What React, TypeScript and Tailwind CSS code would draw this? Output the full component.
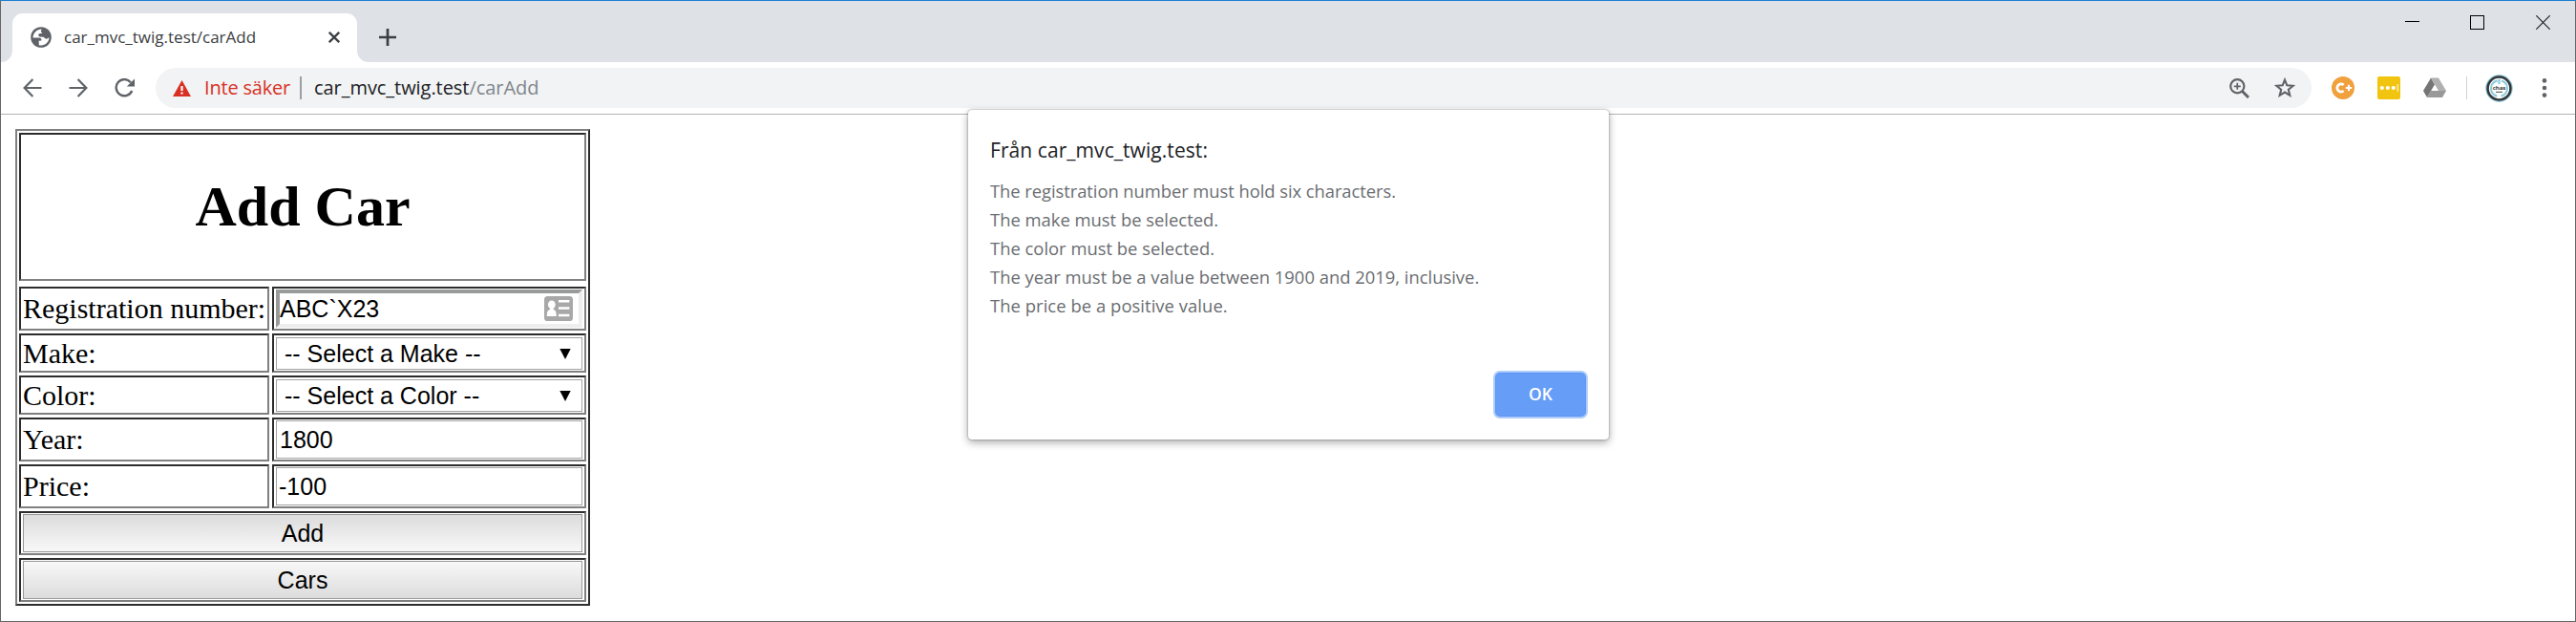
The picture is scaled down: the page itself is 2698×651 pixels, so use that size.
import type { ReactNode } from "react";

const CELL = "border-2 border-t-[#2c2c2c] border-l-[#2c2c2c] border-b-[#808080] border-r-[#808080]";
const SANS = "font-['Liberation_Sans',Arial,sans-serif]";
const UI = "font-['Open_Sans','Noto_Sans',sans-serif]";

function TabStrip() {
  return (
    <div className="flex h-[64px] items-stretch bg-[#dee1e6]">
      <div className="flex w-[12px] items-end bg-white">
        <div className="h-full w-full rounded-br-[12px] bg-[#dee1e6]" />
      </div>
      <div className="flex bg-[#dee1e6] pt-[13px]">
        <div className="flex w-[361px] items-center rounded-t-[11px] bg-white pr-[18px] pl-[19px]">
          <svg className="-mt-px size-[22px] shrink-0" viewBox="0 0 22 22">
            <circle cx="11" cy="11" r="10.8" fill="#5f6368" />
            <path
              d="M11.6 2.5 C6.6 2.6 2.6 6.4 2.5 11.6 L9 11.6 C11.2 11.8 11.6 13 11.4 14.6 L8.6 14.8 L8.8 19.2 C12.4 20 16.2 18.6 18.2 15.4 C19.2 13.8 19.4 12.4 19.4 11.2 L17.4 12.6 C15.6 13 14.8 11.6 13.4 10.8 L9.4 10.4 L8 8.8 L9 7.2 L12.4 6.8 L10.8 5 Z"
              fill="#fff"
            />
          </svg>
          <span className="-mt-px ml-[13px] text-[17px] leading-6 whitespace-nowrap text-[#3c4043]">car_mvc_twig.test/carAdd</span>
          <svg className="-mt-px ml-auto size-[12px] shrink-0" viewBox="0 0 12 12" stroke="#3c4043" strokeWidth="2.3">
            <path d="M0.8 0.8 L11.2 11.2 M11.2 0.8 L0.8 11.2" />
          </svg>
        </div>
      </div>
      <div className="flex flex-1 bg-white">
        <div className="flex flex-1 items-center rounded-bl-[12px] bg-[#dee1e6]">
          <svg className="mt-[12px] ml-[23px] size-[18px]" viewBox="0 0 18 18" stroke="#3c4043" strokeWidth="2.7">
            <path d="M9 0 V18 M0 9 H18" />
          </svg>
          <svg className="mb-[19px] ml-auto h-[15px] w-[16px]" viewBox="0 0 16 15" stroke="#000" strokeWidth="1">
            <path d="M0 6.5 H15" shapeRendering="crispEdges" />
          </svg>
          <svg className="mb-[19px] ml-[52px] size-[15px]" viewBox="0 0 15 15" fill="none" stroke="#000" strokeWidth="1">
            <rect x="0.5" y="0.5" width="14" height="14" shapeRendering="crispEdges" />
          </svg>
          <svg className="mr-[26px] mb-[19px] ml-[54px] size-[15px]" viewBox="0 0 15 15" stroke="#222" strokeWidth="1.2">
            <path d="M0.3 0.3 L14.7 14.7 M14.7 0.3 L0.3 14.7" />
          </svg>
        </div>
      </div>
    </div>
  );
}

function Toolbar() {
  return (
    <div className="flex h-[55px] items-center border-b border-[#b4b4b4] bg-white">
      <svg className="ml-[23px] h-[20px] w-[20px]" viewBox="0 0 20 20" fill="none" stroke="#5f6368" strokeWidth="2.2">
        <path d="M19.5 10 H2 M10.4 1 L1.6 10 L10.4 19" />
      </svg>
      <svg className="ml-[28px] h-[20px] w-[20px]" viewBox="0 0 20 20" fill="none" stroke="#5f6368" strokeWidth="2.2">
        <path d="M0.5 10 H18 M9.6 1 L18.4 10 L9.6 19" />
      </svg>
      <svg className="ml-[28px] h-[20px] w-[22px]" viewBox="0 0 22 20" fill="none">
        <path d="M16.9 4.2 A8.6 8.6 0 1 0 18.2 13" stroke="#5f6368" strokeWidth="2.4" />
        <path d="M21 0.6 V8.6 H12.8 Z" fill="#5f6368" />
      </svg>
      <div className="ml-[21px] flex h-[42px] w-[2258px] items-center rounded-full bg-[#f1f3f4] pl-[18px]">
        <svg className="h-[17px] w-[19px]" viewBox="0 0 19 17">
          <path d="M9.5 0 L19 17 H0 Z" fill="#d93025" />
          <path d="M8.4 6 H10.6 V11 H8.4 Z M8.4 12.4 H10.6 V14.6 H8.4 Z" fill="#fff" />
        </svg>
        <span className="ml-[14px] w-[100px] text-[20px] leading-6 tracking-[-0.2px] whitespace-nowrap text-[#d93025]">Inte säker</span>
        <span className="h-[24px] w-[2px] bg-[#9aa0a6]" />
        <span className="ml-[13px] text-[20px] leading-6 tracking-[-0.05px] whitespace-nowrap text-[#202124]">
          car_mvc_twig.test<span className="text-[#80868b]">/carAdd</span>
        </span>
        <svg className="ml-auto size-[21px]" viewBox="0 0 21 21" fill="none" stroke="#5f6368">
          <circle cx="8.3" cy="8.3" r="7.1" strokeWidth="2.2" />
          <path d="M13.2 13.2 L20 20" strokeWidth="3" />
          <path d="M8.3 4.8 V11.8 M4.8 8.3 H11.8" strokeWidth="1.7" />
        </svg>
        <svg className="mr-[17px] ml-[26px] size-[22px]" viewBox="0 0 22 22">
          <path
            d="M11 2.6 L13.3 8.3 L19.6 8.8 L14.8 12.8 L16.3 18.8 L11 15.6 L5.7 18.8 L7.2 12.8 L2.4 8.8 L8.7 8.3 Z"
            fill="none"
            stroke="#5f6368"
            strokeWidth="2.1"
          />
        </svg>
      </div>
      <div className="ml-[21px] flex size-[24px] items-center justify-center rounded-full bg-[#f0a03c]">
        <svg className="size-[24px]" viewBox="0 0 24 24" fill="none" stroke="#fff">
          <path d="M12.6 9.1 A4 4 0 1 0 12.6 14.9" strokeWidth="2.8" />
          <path d="M18 8.8 V15.2 M14.8 12 H21.2" strokeWidth="2.2" />
        </svg>
      </div>
      <svg className="ml-[24px] size-[24px]" viewBox="0 0 24 24">
        <rect width="24" height="24" rx="2" fill="#f1c40f" />
        <circle cx="4.8" cy="12" r="2.1" fill="#fff" />
        <circle cx="10.8" cy="12" r="2.1" fill="#fff" />
        <circle cx="16.8" cy="12" r="2.1" fill="#fff" />
        <path d="M21.2 8 V16" stroke="#fff" strokeWidth="1" />
      </svg>
      <svg className="ml-[24px] h-[22px] w-[24px]" viewBox="0 0 24 22">
        <path d="M8 0.5 L0 14 L4 21 L12 7.5 Z" fill="#757575" />
        <path d="M8 0.5 H16 L24 14 H16 Z" fill="#b0b0b0" />
        <path d="M8 14 H24 L20 21 H4 Z" fill="#999" />
      </svg>
      <div className="ml-[21px] h-[24px] w-px bg-[#cfd1d4]" />
      <svg className="ml-[19px] size-[29px]" viewBox="0 0 29 29">
        <circle cx="14.5" cy="14.5" r="14.2" fill="#8cc3d2" />
        <circle cx="14.5" cy="14.5" r="11.9" fill="#fff" stroke="#33383b" strokeWidth="2.5" />
        <circle cx="14.5" cy="14.5" r="8.4" fill="none" stroke="#8ecbdc" strokeWidth="2.2" strokeDasharray="22 4.4" strokeDashoffset="11" />
        <path d="M14.5 4.6 V10" stroke="#8ecbdc" strokeWidth="2.2" />
        <rect x="7.6" y="10.8" width="13.8" height="6.4" fill="#fff" />
        <text x="14.5" y="16.2" textAnchor="middle" fontSize="6" fontWeight="700" fontFamily="Open Sans" fill="#333">
          chas
        </text>
        <path d="M11 18.4 H18" stroke="#666" strokeWidth="1.2" />
      </svg>
      <svg className="ml-[30px] h-[20px] w-[6px]" viewBox="0 0 6 20" fill="#5f6368">
        <circle cx="3" cy="2.4" r="2.3" />
        <circle cx="3" cy="10" r="2.3" />
        <circle cx="3" cy="17.6" r="2.3" />
      </svg>
    </div>
  );
}

function Row({ label, className, children }: { label: string; className: string; children: ReactNode }) {
  return (
    <div className={`flex gap-[3px] ${className}`}>
      <div className={`flex w-[262px] items-center pl-[2px] text-[30px] leading-none whitespace-nowrap ${CELL}`}>{label}</div>
      <div className={`flex-1 p-[2px] ${CELL}`}>{children}</div>
    </div>
  );
}

function Select({ label }: { label: string }) {
  return (
    <div className={`flex h-[34px] items-center justify-between border border-[#a3a3a3] pr-[11px] pl-[8px] text-[25px] leading-none ${SANS}`}>
      <span className="whitespace-pre">{label}</span>
      <svg className="h-[11px] w-[12px]" viewBox="0 0 12 11">
        <path d="M0.3 0 H11.7 L6 11 Z" fill="#000" />
      </svg>
    </div>
  );
}

function NumberField({ value, className }: { value: string; className: string }) {
  return (
    <div className={`-mt-px flex h-[40px] items-center border border-[#a3a3a3] text-[25px] leading-none ${SANS} ${className}`}>{value}</div>
  );
}

function CarForm() {
  return (
    <div className="mt-[15px] ml-[15px] flex h-[499px] w-[602px] flex-col gap-[3px] border-2 border-t-[#808080] border-r-[#2c2c2c] border-b-[#2c2c2c] border-l-[#808080] p-[2px] font-['Liberation_Serif','Times_New_Roman',serif] text-black">
      <h1 className={`mb-[3px] flex h-[155px] shrink-0 items-center justify-center pb-px text-[60px] leading-none font-bold ${CELL}`}>Add Car</h1>
      <Row label="Registration number:" className="h-[46px]">
        <div
          className={`-mt-px flex h-[40px] items-center justify-between border-4 border-t-[#999b9b] border-r-[#eee] border-b-[#eee] border-l-[#999b9b] pr-[6px] text-[25px] leading-none ${SANS}`}
        >
          <span>ABC`X23</span>
          <svg className="h-[26px] w-[30px]" viewBox="0 0 30 26">
            <rect width="30" height="26" rx="3.6" fill="#a8a8a8" />
            <ellipse cx="7.8" cy="8.8" rx="3.9" ry="4.4" fill="#fff" />
            <path d="M6 12 H9.6 V14 C12 14.6 12.8 16.6 12.8 21 H2.8 C2.8 16.6 3.6 14.6 6 14 Z" fill="#fff" />
            <path d="M15 5.2 H26.4 M15 12.6 H26.4 M15 20 H26.4" stroke="#fff" strokeWidth="2.5" />
          </svg>
        </div>
      </Row>
      <Row label="Make:" className="h-[41px]">
        <Select label="-- Select a Make --" />
      </Row>
      <Row label="Color:" className="h-[41px]">
        <Select label="-- Select a Color --" />
      </Row>
      <Row label="Year:" className="h-[46px]">
        <NumberField value="1800" className="pl-[3px]" />
      </Row>
      <Row label="Price:" className="h-[46px]">
        <NumberField value="-100" className="pl-[2px]" />
      </Row>
      <div className={`h-[46px] p-[2px] pt-px ${CELL}`}>
        <button className={`block h-[40px] w-full border border-[#999] bg-linear-to-b from-[#dcdcdc] to-[#f8f8f8] text-[25px] leading-none ${SANS}`}>Add</button>
      </div>
      <div className={`h-[46px] p-[2px] pt-px ${CELL}`}>
        <button className={`block h-[40px] w-full border border-[#999] bg-linear-to-b from-[#f8f8f8] to-[#dcdcdc] text-[25px] leading-none ${SANS}`}>Cars</button>
      </div>
    </div>
  );
}

function AlertDialog() {
  return (
    <div
      className={`absolute top-[114px] left-[1013px] flex h-[345px] w-[671px] flex-col rounded-[4px] bg-white px-[23px] shadow-[0_3px_8px_rgba(0,0,0,0.35),0_0_2px_rgba(0,0,0,0.45)] ${UI}`}
    >
      <h2 className="mt-[28px] text-[21px] leading-[28px] tracking-[0.07px] text-[#202124]">Från car_mvc_twig.test:</h2>
      <div className="mt-[14px] text-[18.4px] leading-[30px] whitespace-nowrap text-[#6a6d71]">
        <p className="tracking-[-0.06px]">The registration number must hold six characters.</p>
        <p>The make must be selected.</p>
        <p>The color must be selected.</p>
        <p>The year must be a value between 1900 and 2019, inclusive.</p>
        <p className="tracking-[0.06px]">The price be a positive value.</p>
      </div>
      <button className="mt-auto mr-[-1px] mb-[22px] h-[50px] w-[99px] self-end rounded-[7px] border-2 border-[#aecbfa] bg-[#669df6] text-[17.5px] leading-none font-semibold text-white shadow-[inset_0_0_0_1px_#5a94f4]">
        OK
      </button>
    </div>
  );
}

export default function App() {
  return (
    <div className={`relative h-[651px] w-[2698px] overflow-hidden border border-t-[#1a7fd4] border-r-[#666] border-b-[#666] border-l-[#666] bg-white ${UI}`}>
      <TabStrip />
      <Toolbar />
      <CarForm />
      <AlertDialog />
    </div>
  );
}
